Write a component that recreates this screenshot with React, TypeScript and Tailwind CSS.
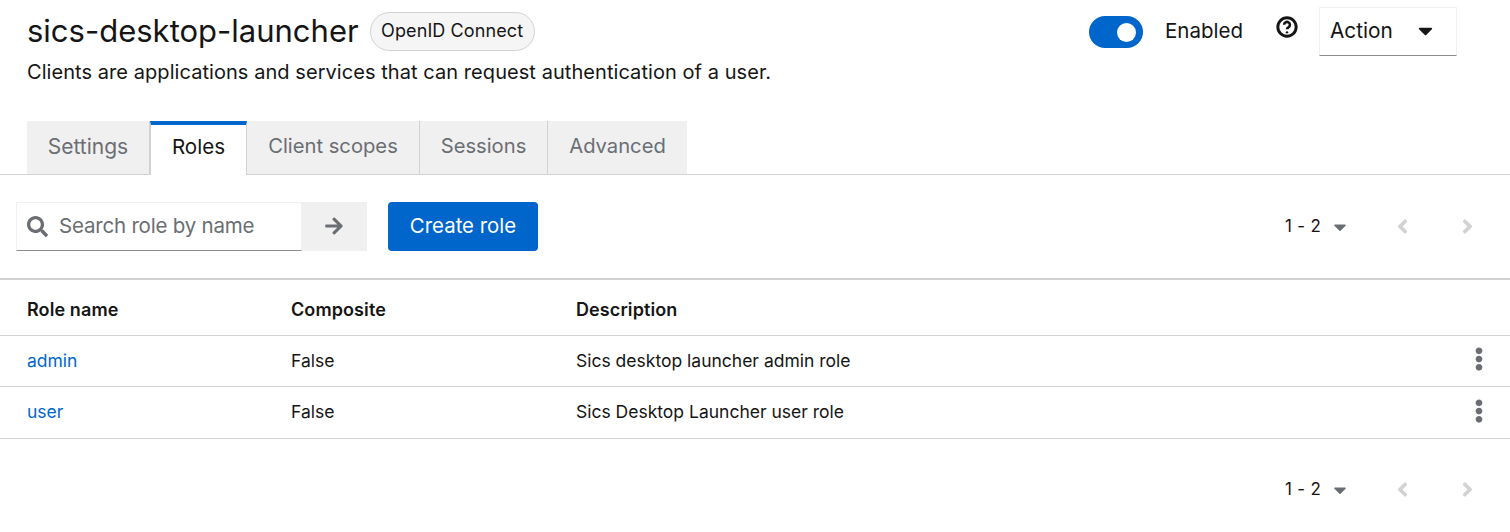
import { FaSearch, FaArrowRight, FaCaretDown, FaAngleLeft, FaAngleRight, FaEllipsisV } from "react-icons/fa";

function Pager() {
  return (
    <div className="flex items-center">
      <span className="text-[17px] text-[#151515] w-[48px] tracking-[0.3px]">1 - 2</span>
      <div className="w-[14px] flex justify-center"><FaCaretDown className="text-[#6a6e73] text-[20px] shrink-0" /></div>
      <div className="w-[12px] ml-[49px] flex justify-center"><FaAngleLeft className="text-[#d2d2d2] text-[23px] shrink-0" /></div>
      <div className="w-[12px] ml-[53px] flex justify-center"><FaAngleRight className="text-[#d2d2d2] text-[23px] shrink-0" /></div>
      <div className="w-[37px]" />
    </div>
  );
}

function Tab({ label, w, size, active }: { label: string; w: string; size: string; active?: boolean }) {
  return active ? (
    <div className={`${w} ${size} h-[54px] flex items-center justify-center bg-white border-t-[4px] border-t-[#06c] border-x border-x-[#d2d2d2] text-[#151515] -mb-px pb-[5px] relative`}>{label}</div>
  ) : (
    <div className={`${w} ${size} h-[53px] flex items-center justify-center bg-[#f0f0f0] border-r border-r-[#d2d2d2] last:border-r-0 text-[#6a6e73] pb-[2px]`}>{label}</div>
  );
}

function Row({ name, desc, h }: { name: string; desc: string; h: string }) {
  return (
    <div className={`${h} flex items-center border-b border-[#d2d2d2] text-[17.5px] text-[#151515]`}>
      <a className="w-[291px] pl-[27px] text-[#06c]">{name}</a>
      <div className="w-[285px]">False</div>
      <div className="flex-1">{desc}</div>
      <FaEllipsisV className="text-[#6a6e73] text-[24px] mr-[19px] mb-[4px]" />
    </div>
  );
}

export default function App() {
  return (
    <div className="w-[1510px] h-[532px] bg-white overflow-hidden font-['Inter','Noto_Sans',sans-serif] text-[#151515]">
      <div className="flex justify-between pl-[27px] pr-[53px] pt-[7px] h-[121px]">
        <div>
          <div className="flex items-center gap-[11px] h-[49px]">
            <h1 className="text-[31px] font-normal">sics-desktop-launcher</h1>
            <span className="h-[39px] w-[165px] justify-center pb-[2px] rounded-[20px] border border-[#d2d2d2] bg-[#f5f5f5] flex items-center text-[18px] tracking-[0.1px]">OpenID Connect</span>
          </div>
          <p className="text-[20px] tracking-[0.06px] mt-[1px]">Clients are applications and services that can request authentication of a user.</p>
        </div>
        <div className="flex items-start">
          <div className="w-[54px] h-[32px] mt-[9px] rounded-full bg-[#06c] flex items-center justify-end pr-[7px]">
            <div className="w-[19px] h-[19px] rounded-full bg-white" />
          </div>
          <span className="text-[20.5px] ml-[22px] mt-[9px]">Enabled</span>
          <svg viewBox="0 0 24 24" className="w-[22px] h-[22px] ml-[33px] mt-[9px]" fill="none" stroke="#151515" strokeWidth="3.2">
            <circle cx="12" cy="12" r="10" />
            <path d="M8.8 9.6a3.2 3.2 0 1 1 4.8 2.8c-1 .6-1.6 1-1.6 2" strokeWidth="2.8" />
            <circle cx="12" cy="17.8" r="1.3" fill="#151515" stroke="none" />
          </svg>
          <div className="ml-[21px] w-[138px] h-[49px] border border-[#f0f0f0] border-b-[#8a8d90] flex items-center pl-[10px] pb-[2px] text-[20.8px]">
            <span className="w-[84px]">Action</span>
            <FaCaretDown className="text-[23px] shrink-0" />
          </div>
        </div>
      </div>

      <div className="border-b border-[#d2d2d2] pl-[27px] flex items-end h-[54px]">
        <Tab label="Settings" w="w-[123px]" size="text-[21px]" />
        <Tab label="Roles" w="w-[97px]" size="text-[20.6px]" active />
        <Tab label="Client scopes" w="w-[173px]" size="text-[20.2px]" />
        <Tab label="Sessions" w="w-[128px]" size="text-[20.2px]" />
        <Tab label="Advanced" w="w-[139px]" size="text-[20.2px]" />
      </div>

      <div className="h-[105px] border-b-[2px] border-[#d2d2d2] flex items-start justify-between pl-[16px] pr-0 pt-[27px]">
        <div className="flex items-center">
          <div className="w-[286px] h-[49px] border border-[#f0f0f0] border-b-[#8a8d90] flex items-center pl-[10px] pb-[1px]">
            <FaSearch className="text-[#6a6e73] text-[21px]" />
            <span className="ml-[11px] text-[20.5px] text-[#6a6e73] tracking-[-0.2px]">Search role by name</span>
          </div>
          <div className="w-[65px] h-[49px] bg-[#f0f0f0] flex items-center justify-center pr-[2px] pb-[1px]">
            <FaArrowRight className="text-[#6a6e73] text-[20px]" />
          </div>
          <div className="ml-[21px] w-[150px] h-[49px] bg-[#06c] rounded-[4px] flex items-center justify-center text-white text-[20.4px] pb-[1px]">Create role</div>
        </div>
        <div className="h-[49px] flex items-center"><Pager /></div>
      </div>

      <div className="h-[56px] flex items-center border-b border-[#d2d2d2] text-[18px] font-semibold tracking-[0.1px] pt-[4px]">
        <div className="w-[291px] pl-[27px]">Role name</div>
        <div className="w-[285px]">Composite</div>
        <div>Description</div>
      </div>
      <Row name="admin" desc="Sics desktop launcher admin role" h="h-[51px]" />
      <Row name="user" desc="Sics Desktop Launcher user role" h="h-[52px]" />
      <div className="flex justify-end pt-[38px]"><Pager /></div>
    </div>
  );
}
